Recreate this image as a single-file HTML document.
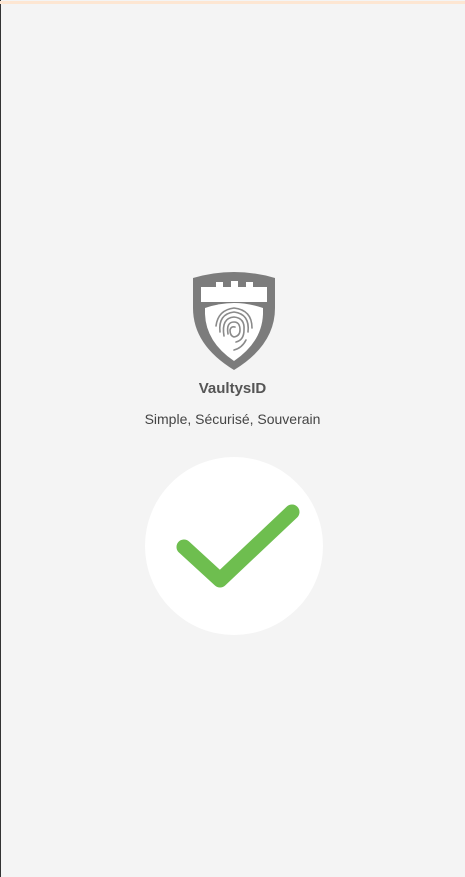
<!DOCTYPE html>
<html><head><style>
html,body{margin:0;padding:0}
body{width:465px;height:877px;background:#f4f4f4;position:relative;overflow:hidden;font-family:"Liberation Sans",sans-serif;border-left:1px solid #333;box-sizing:border-box}
.top{position:absolute;left:-1px;top:1px;width:466px;height:3px;background:#fde6d2}
.t1{position:absolute;top:380px;left:-1px;width:465px;text-align:center;font-size:15px;color:#555;font-weight:bold}
.t2{position:absolute;top:411px;left:-1px;width:465px;text-align:center;font-size:14px;color:#444}
.c{position:absolute;left:144px;top:457px;width:178px;height:178px;border-radius:50%;background:#fff}
</style></head><body>
<div class="top"></div>
<svg style="position:absolute;left:189px;top:270px" width="88" height="101" viewBox="0 0 88 101">
<path d="M3 8 Q44 -4 85 8 L85 38 Q85 75 44 100 Q3 75 3 38 Z" fill="#7c7c7c"/>
<path d="M11 17 L26 17 L26 12 L33 12 L33 17 L41 17 L41 11 L48 11 L48 17 L56 17 L56 12 L63 12 L63 17 L77 17 L77 32 L11 32 Z" fill="#fff"/>
<path d="M15 38 Q44 28 73 38 L73 44 Q72 72 44 91 Q16 72 15 44 Z" fill="#fff"/>
<g fill="none" stroke="#8a8a8a" stroke-width="1.6" stroke-linecap="round">
<path d="M30 62 Q28 44 44 42 Q60 44 58 62"/>
<path d="M34 66 Q31 48 44 47 Q55 48 54 60 Q54 70 46 72"/>
<path d="M38 64 Q36 52 44 52 Q50 52 50 60 Q50 66 44 67 Q40 66 40 60 Q41 56 45 57"/>
<path d="M26 56 Q28 40 44 38 Q62 40 62 58"/>
<path d="M56 70 Q52 78 44 80"/>
</g>
</svg>
<div class="t1">VaultysID</div>
<div class="t2">Simple, Sécurisé, Souverain</div>
<div class="c"></div>
<svg style="position:absolute;left:144px;top:457px" width="178" height="178">
<path d="M39 90 L75 123 L147 55" fill="none" stroke="#6ebe4f" stroke-width="15" stroke-linecap="round" stroke-linejoin="round"/>
</svg>
</body></html>
